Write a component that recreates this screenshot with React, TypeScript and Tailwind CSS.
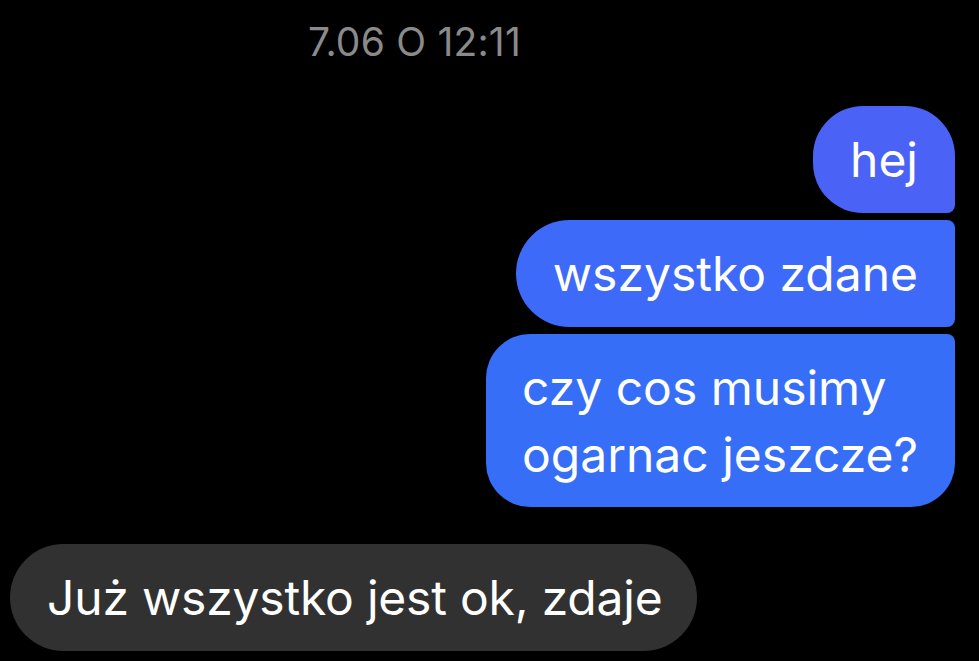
import React from "react";

export default function App() {
  return (
    <div
      className="w-[979px] h-[661px] bg-black overflow-hidden flex flex-col"
      style={{ fontFamily: "Inter, 'Noto Sans', sans-serif" }}
    >
      <div className="pt-[22px] pl-[308px] text-[39px] leading-[40px] text-[#8a8a8a] tracking-[0.2px]">
        7.06 O 12:11
      </div>
      <div className="flex flex-col items-end pr-[24px] mt-[44px] gap-[7px]">
        <div className="bg-[#4a62f6] text-white text-[48px] leading-[67px] px-[37px] py-[20px] rounded-tl-[50px] rounded-tr-[50px] rounded-bl-[50px] rounded-br-[8px]">
          hej
        </div>
        <div className="bg-[#3d6af9] text-white text-[48px] leading-[67px] px-[37px] py-[20px] rounded-l-[54px] rounded-r-[8px]">
          wszystko zdane
        </div>
        <div className="bg-[#366ef8] text-white text-[48px] leading-[67px] pl-[36px] pr-[37px] py-[19.5px] rounded-tl-[44px] rounded-bl-[44px] rounded-tr-[8px] rounded-br-[44px]">
          czy cos musimy
          <br />
          ogarnac jeszcze?
        </div>
      </div>
      <div className="pl-[10px] mt-[37px] flex">
        <div className="bg-[#313131] text-white text-[48px] leading-[67px] tracking-[-0.2px] pl-[37px] pr-[35px] py-[20px] rounded-[54px]">
          Już wszystko jest ok, zdaje
        </div>
      </div>
    </div>
  );
}
